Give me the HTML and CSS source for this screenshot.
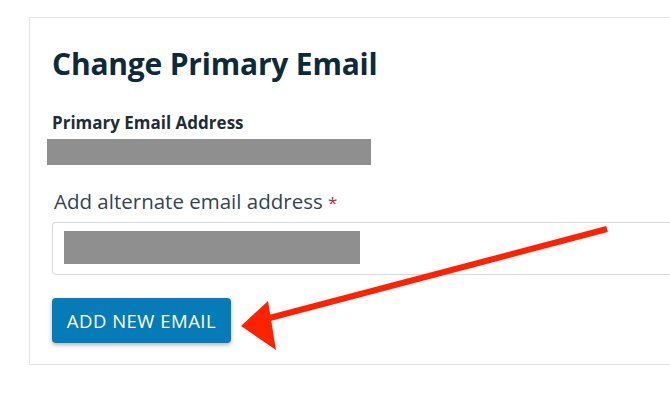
FILE: index.html
```html
<!DOCTYPE html>
<html>
<head>
<meta charset="utf-8">
<link rel="stylesheet" href="styles.css">
</head>
<body>
<div class="page">
  <section class="card">
    <h1 class="title">Change Primary Email</h1>
    <div class="field-static">
      <div class="label-strong">Primary Email Address</div>
      <div class="redact redact-primary"></div>
    </div>
    <div class="field">
      <label class="label">Add alternate email address <span class="req">*</span></label>
      <div class="input">
        <div class="redact redact-input"></div>
      </div>
    </div>
    <button class="btn">ADD NEW EMAIL</button>
  </section>
  <svg class="arrow" width="670" height="406" viewBox="0 0 670 406">
    <line x1="607" y1="229" x2="262" y2="320" stroke="#ff2200" stroke-width="6"/>
    <polygon points="241,326 268,301 276,350" fill="#ff2200"/>
  </svg>
</div>
</body>
</html>
```
FILE: styles.css
```css
html, body {
  margin: 0;
  padding: 0;
  background: #ffffff;
}
body {
  font-family: "Open Sans", Lato, sans-serif;
  overflow: hidden;
}
.page {
  position: relative;
  width: 670px;
  height: 406px;
  padding: 17px 0 0 29px;
  box-sizing: border-box;
  overflow: hidden;
}
.card {
  width: 641px;
  height: 348px;
  box-sizing: border-box;
  border: 1px solid #e3e4e8;
  border-right: none;
  padding: 28px 0 0 22px;
  display: flex;
  flex-direction: column;
  align-items: flex-start;
}
.title {
  margin: 0;
  font-size: 30px;
  font-weight: 700;
  color: #0c2a38;
  line-height: 36px;
  letter-spacing: -0.2px;
}
.field-static {
  margin-top: 31px;
  display: flex;
  flex-direction: column;
}
.label-strong {
  font-size: 17px;
  font-weight: 700;
  color: #1f2d36;
  line-height: 20px;
}
.redact {
  background: #8f8f8f;
}
.redact-primary {
  width: 324px;
  height: 26px;
  margin-top: 6px;
  margin-left: -5px;
}
.field {
  margin-top: 24px;
  display: flex;
  flex-direction: column;
  width: 100%;
}
.label {
  font-size: 20.5px;
  color: #34454f;
  line-height: 24px;
  padding-left: 2px;
}
.req {
  color: #d0213a;
  font-size: 17px;
}
.input {
  margin-top: 7px;
  height: 53px;
  box-sizing: border-box;
  border: 1px solid #d6d9de;
  border-right: none;
  border-radius: 4px 0 0 4px;
  padding: 8px 0 0 11px;
}
.redact-input {
  width: 296px;
  height: 33px;
}
.btn {
  margin-top: 23px;
  width: 179px;
  height: 45px;
  border: none;
  border-radius: 4px;
  background: #057cb7;
  color: #ffffff;
  font-family: "Open Sans", Lato, sans-serif;
  font-size: 18.5px;
  letter-spacing: 0.5px;
  padding: 0;
  box-shadow: 0 2px 4px rgba(0, 0, 0, 0.3);
}
.arrow {
  position: absolute;
  left: 0;
  top: 0;
  pointer-events: none;
}
```
